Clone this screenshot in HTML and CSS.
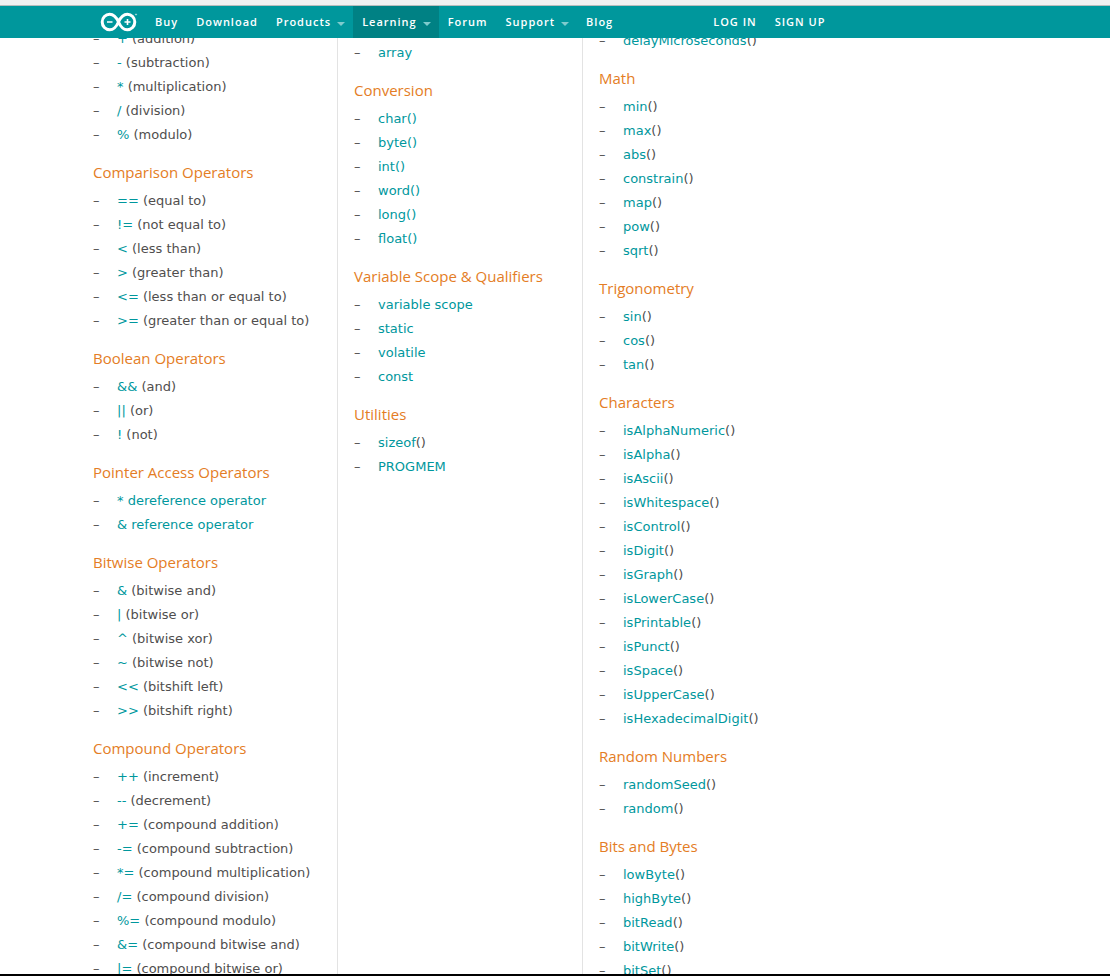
FILE: index.html
```html
<!DOCTYPE html>
<html lang="en">
<head>
<meta charset="utf-8">
<title>Arduino - Reference</title>
<link rel="stylesheet" href="styles.css">
</head>
<body>
<header class="topbar">
  <nav class="nav" aria-label="Main">
    <a class="logo" href="#" aria-label="Arduino">
      <svg width="38" height="20" viewBox="0 0 38 20" fill="none" stroke="#fff">
        <path d="M18.500 10C16.500 5.500 13.800 2.200 9.700 2.200C5.500 2.200 2.200 5.600 2.200 10S5.500 17.800 9.700 17.800C13.800 17.800 16.500 14.500 18.500 10C20.500 5.500 23.200 2.200 27.300 2.200C31.500 2.200 34.800 5.600 34.800 10S31.500 17.800 27.300 17.800C23.200 17.800 20.500 14.500 18.500 10Z" stroke-width="3"/>
        <path d="M7 10H12.500M24.500 10H30.500M27.500 7V13" stroke-width="1.600"/>
        <circle cx="36" cy="2.500" r=".6" stroke-width=".6"/>
      </svg>
    </a>
    <a class="nav-link" href="#">Buy</a>
    <a class="nav-link" href="#">Download</a>
    <a class="nav-link has-menu" href="#">Products</a>
    <a class="nav-link has-menu active" href="#">Learning</a>
    <a class="nav-link" href="#">Forum</a>
    <a class="nav-link has-menu" href="#">Support</a>
    <a class="nav-link" href="#">Blog</a>
    <div class="account">
      <a class="nav-link" href="#">LOG IN</a>
      <a class="nav-link" href="#">SIGN UP</a>
    </div>
  </nav>
</header>
<main class="columns">
  <section class="column structure">
    <ul>
      <li><a href="#">+</a> (addition)</li>
      <li><a href="#">-</a> (subtraction)</li>
      <li><a href="#">*</a> (multiplication)</li>
      <li><a href="#">/</a> (division)</li>
      <li><a href="#">%</a> (modulo)</li>
    </ul>
    <h3>Comparison Operators</h3>
    <ul>
      <li><a href="#">==</a> (equal to)</li>
      <li><a href="#">!=</a> (not equal to)</li>
      <li><a href="#">&lt;</a> (less than)</li>
      <li><a href="#">&gt;</a> (greater than)</li>
      <li><a href="#">&lt;=</a> (less than or equal to)</li>
      <li><a href="#">&gt;=</a> (greater than or equal to)</li>
    </ul>
    <h3>Boolean Operators</h3>
    <ul>
      <li><a href="#">&amp;&amp;</a> (and)</li>
      <li><a href="#">||</a> (or)</li>
      <li><a href="#">!</a> (not)</li>
    </ul>
    <h3>Pointer Access Operators</h3>
    <ul>
      <li><a href="#">* dereference operator</a></li>
      <li><a href="#">&amp; reference operator</a></li>
    </ul>
    <h3>Bitwise Operators</h3>
    <ul>
      <li><a href="#">&amp;</a> (bitwise and)</li>
      <li><a href="#">|</a> (bitwise or)</li>
      <li><a href="#">^</a> (bitwise xor)</li>
      <li><a href="#">~</a> (bitwise not)</li>
      <li><a href="#">&lt;&lt;</a> (bitshift left)</li>
      <li><a href="#">&gt;&gt;</a> (bitshift right)</li>
    </ul>
    <h3>Compound Operators</h3>
    <ul>
      <li><a href="#">++</a> (increment)</li>
      <li><a href="#">--</a> (decrement)</li>
      <li><a href="#">+=</a> (compound addition)</li>
      <li><a href="#">-=</a> (compound subtraction)</li>
      <li><a href="#">*=</a> (compound multiplication)</li>
      <li><a href="#">/=</a> (compound division)</li>
      <li><a href="#">%=</a> (compound modulo)</li>
      <li><a href="#">&amp;=</a> (compound bitwise and)</li>
      <li><a href="#">|=</a> (compound bitwise or)</li>
    </ul>
  </section>
  <section class="column variables">
    <ul>
      <li><a href="#">array</a></li>
    </ul>
    <h3>Conversion</h3>
    <ul>
      <li><a href="#">char()</a></li>
      <li><a href="#">byte()</a></li>
      <li><a href="#">int()</a></li>
      <li><a href="#">word()</a></li>
      <li><a href="#">long()</a></li>
      <li><a href="#">float()</a></li>
    </ul>
    <h3>Variable Scope &amp; Qualifiers</h3>
    <ul>
      <li><a href="#">variable scope</a></li>
      <li><a href="#">static</a></li>
      <li><a href="#">volatile</a></li>
      <li><a href="#">const</a></li>
    </ul>
    <h3>Utilities</h3>
    <ul>
      <li><a href="#">sizeof</a>()</li>
      <li><a href="#">PROGMEM</a></li>
    </ul>
  </section>
  <section class="column functions">
    <ul>
      <li><a href="#">delayMicroseconds</a>()</li>
    </ul>
    <h3>Math</h3>
    <ul>
      <li><a href="#">min</a>()</li>
      <li><a href="#">max</a>()</li>
      <li><a href="#">abs</a>()</li>
      <li><a href="#">constrain</a>()</li>
      <li><a href="#">map</a>()</li>
      <li><a href="#">pow</a>()</li>
      <li><a href="#">sqrt</a>()</li>
    </ul>
    <h3>Trigonometry</h3>
    <ul>
      <li><a href="#">sin</a>()</li>
      <li><a href="#">cos</a>()</li>
      <li><a href="#">tan</a>()</li>
    </ul>
    <h3>Characters</h3>
    <ul>
      <li><a href="#">isAlphaNumeric</a>()</li>
      <li><a href="#">isAlpha</a>()</li>
      <li><a href="#">isAscii</a>()</li>
      <li><a href="#">isWhitespace</a>()</li>
      <li><a href="#">isControl</a>()</li>
      <li><a href="#">isDigit</a>()</li>
      <li><a href="#">isGraph</a>()</li>
      <li><a href="#">isLowerCase</a>()</li>
      <li><a href="#">isPrintable</a>()</li>
      <li><a href="#">isPunct</a>()</li>
      <li><a href="#">isSpace</a>()</li>
      <li><a href="#">isUpperCase</a>()</li>
      <li><a href="#">isHexadecimalDigit</a>()</li>
    </ul>
    <h3>Random Numbers</h3>
    <ul>
      <li><a href="#">randomSeed</a>()</li>
      <li><a href="#">random</a>()</li>
    </ul>
    <h3>Bits and Bytes</h3>
    <ul>
      <li><a href="#">lowByte</a>()</li>
      <li><a href="#">highByte</a>()</li>
      <li><a href="#">bitRead</a>()</li>
      <li><a href="#">bitWrite</a>()</li>
      <li><a href="#">bitSet</a>()</li>
    </ul>
  </section>
</main>
</body>
</html>
```
FILE: styles.css
```css
* { box-sizing: border-box; }

body {
  margin: 0;
  height: 100vh;
  overflow: hidden;
  border-bottom: 2px solid #000;
  background: #fff;
  color: #4f4e4e;
  font: 13px/24px "DejaVu Sans", Verdana, sans-serif;
}

a { color: #00979d; text-decoration: none; }

.topbar {
  position: fixed;
  inset: 0 0 auto;
  background: #00979c;
  border-top: 5px solid #f1f1f1;
  box-shadow: inset 0 1px #b9bdbd;
}

.nav {
  display: flex;
  align-items: stretch;
  max-width: 924px;
  height: 33px;
  margin: 0 auto;
  padding: 1px 0 0 7px;
}

.logo {
  display: flex;
  align-items: center;
  margin-right: 8px;
}

.nav-link {
  display: flex;
  align-items: center;
  padding: 0 9px;
  color: #fff;
  font: 600 11px/16px "Open Sans", "Noto Sans", sans-serif;
  letter-spacing: 1px;
}

.has-menu::after {
  content: "";
  margin: 4px 0 0 6px;
  border: 4px solid transparent;
  border-top-color: #7fcbcd;
  border-bottom: 0;
}

.has-menu { padding-right: 8px; }
.active { background: #008184; }

.account {
  display: flex;
  margin-left: 82px;
}

.columns {
  display: grid;
  grid-template-columns: 244fr 245fr 435fr;
  max-width: 924px;
  height: 100%;
  margin: 0 auto;
}

.column + .column {
  padding-left: 16px;
  border-left: 1px solid #e3e3e3;
}

.structure { padding-top: 27px; }
.variables { padding-top: 41px; }
.functions { padding-top: 29px; }

h3 {
  margin: 13px 0 5px;
  color: #e47d25;
  font: 400 15px/24px "Open Sans", "Noto Sans", sans-serif;
}

ul {
  margin: 0;
  padding: 0;
  list-style: none;
}

li {
  display: flex;
  white-space: pre;
}

li::before {
  content: "–";
  width: 24px;
}
```
